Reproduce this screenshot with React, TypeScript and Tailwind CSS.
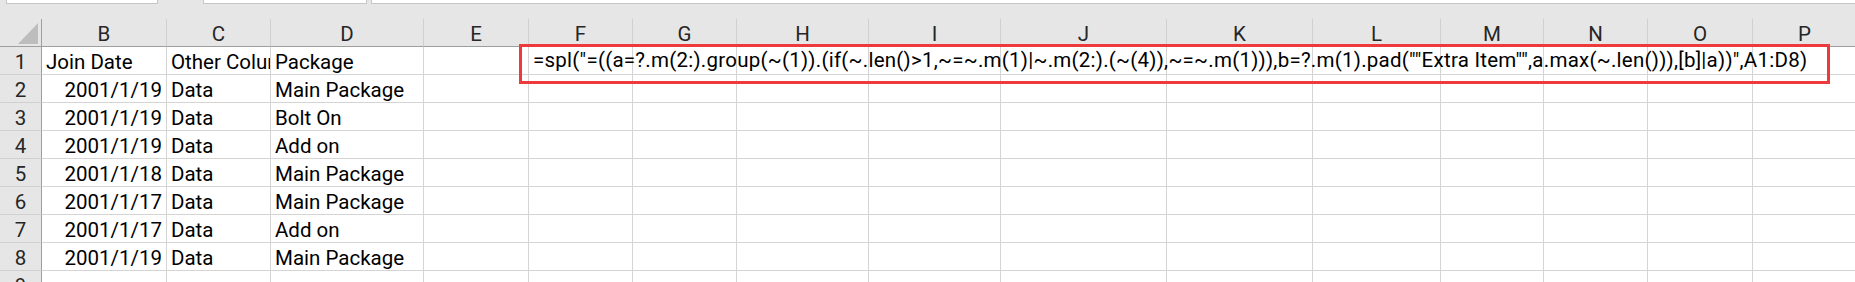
import React from "react";

const cols = ["B", "C", "D", "E", "F", "G", "H", "I", "J", "K", "L", "M", "N", "O", "P"];

const formula =
  '=spl("=((a=?.m(2:).group(~(1)).(if(~.len()>1,~=~.m(1)|~.m(2:).(~(4)),~=~.m(1))),b=?.m(1).pad(""Extra Item"",a.max(~.len())),[b]|a))",A1:D8)';

const rows: { date: string; other: string; pkg: string }[] = [
  { date: "2001/1/19", other: "Data", pkg: "Main Package" },
  { date: "2001/1/19", other: "Data", pkg: "Bolt On" },
  { date: "2001/1/19", other: "Data", pkg: "Add on" },
  { date: "2001/1/18", other: "Data", pkg: "Main Package" },
  { date: "2001/1/17", other: "Data", pkg: "Main Package" },
  { date: "2001/1/17", other: "Data", pkg: "Add on" },
  { date: "2001/1/19", other: "Data", pkg: "Main Package" },
];

const gridCols =
  "grid grid-cols-[42px_125px_104px_153px_105px_104px_104px_132px_132px_166px_146px_128px_103px_104px_105px_104px]";

function Cell({
  children,
  align = "left",
  overflow = false,
}: {
  children?: React.ReactNode;
  align?: "left" | "right";
  overflow?: boolean;
}) {
  return (
    <div
      className={`h-[28px] border-r border-b border-[#d4d4d4] bg-white leading-[25px] whitespace-nowrap ${
        overflow ? "overflow-visible relative z-10 pt-[1px] tracking-[0.25px]" : "overflow-hidden pt-[3px]"
      } ${align === "right" ? "text-right pr-[4px]" : "pl-[4px]"}`}
    >
      {children}
    </div>
  );
}

function RowHead({ n }: { n: number }) {
  return (
    <div className="h-[28px] border-r border-r-[#9e9e9e] border-b border-b-[#d0d0d0] bg-[#e6e6e6] pt-[3px] leading-[25px] text-center text-[#262626]">
      {n}
    </div>
  );
}

export default function App() {
  return (
    <div className="relative w-[1855px] h-[282px] overflow-hidden bg-[#e6e6e6] font-['Roboto','Liberation_Sans',sans-serif] text-[20.5px] text-black">
      {/* name box / formula bar bottoms */}
      <div className="flex h-[19px] items-start">
        <div className="ml-[6px] w-[152px] h-[4px] bg-white border-x border-b border-[#c6c6c6]" />
        <div className="ml-[45px] w-[164px] h-[4px] bg-white border-x border-b border-[#c6c6c6]" />
        <div className="ml-[4px] flex-1 h-[4px] bg-white border-l border-b border-[#c6c6c6]" />
      </div>

      {/* column headers */}
      <div className={gridCols}>
        <div className="relative h-[28px] border-r border-b border-[#9e9e9e] bg-[#e6e6e6]">
          <svg className="absolute left-[18px] top-[4px]" width="20" height="21" viewBox="0 0 20 21">
            <polygon points="0,21 20,21 20,0" fill="#bdbdbd" />
          </svg>
        </div>
        {cols.map((c) => (
          <div
            key={c}
            className="h-[28px] border-r border-r-[#d0d0d0] border-b border-b-[#9e9e9e] bg-[#e6e6e6] pt-[4px] leading-[23px] text-center text-[#262626]"
          >
            {c}
          </div>
        ))}
      </div>

      {/* body */}
      <div className={gridCols}>
        <RowHead n={1} />
        <Cell>Join Date</Cell>
        <Cell>Other Column</Cell>
        <Cell>Package</Cell>
        <Cell />
        <Cell overflow>{formula}</Cell>
        {cols.slice(5).map((c) => (
          <Cell key={c} />
        ))}

        {rows.map((r, i) => (
          <React.Fragment key={i}>
            <RowHead n={i + 2} />
            <Cell align="right">{r.date}</Cell>
            <Cell>{r.other}</Cell>
            <Cell>{r.pkg}</Cell>
            {cols.slice(3).map((c) => (
              <Cell key={c} />
            ))}
          </React.Fragment>
        ))}

        <RowHead n={9} />
        {cols.map((c) => (
          <Cell key={c} />
        ))}
      </div>

      {/* annotation box */}
      <div className="absolute left-[519px] top-[44px] w-[1311px] h-[40px] border-[3px] border-[#ee3a3a] z-20 pointer-events-none" />
    </div>
  );
}
